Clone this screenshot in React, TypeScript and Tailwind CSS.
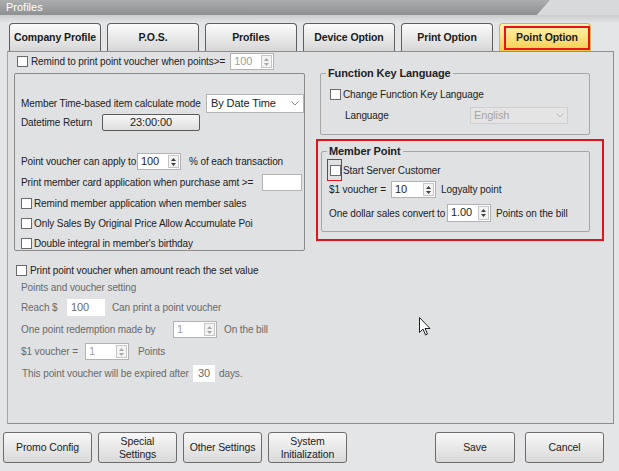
import React from 'react';

function Check() {
  return <span className="inline-block w-[11px] h-[11px] bg-white border border-[#6a6a6a] shrink-0" />;
}

function Arrows({ disabled }: { disabled?: boolean }) {
  const c = disabled ? '#a8a8a8' : '#404040';
  return (
    <span className="w-[11px] my-[1px] mr-[1px] border border-[#c6c6c6] bg-[#f3f3f3] flex flex-col items-center justify-center gap-[2px]">
      <svg width="5" height="3" viewBox="0 0 5 3">
        <path d="M0 3 L2.5 0 L5 3 Z" fill={c} />
      </svg>
      <svg width="5" height="3" viewBox="0 0 5 3">
        <path d="M0 0 L2.5 3 L5 0 Z" fill={c} />
      </svg>
    </span>
  );
}

function Spin({ value, className, disabled }: { value: string; className: string; disabled?: boolean }) {
  return (
    <div className={`flex h-[17px] bg-white border border-[#b2b2b2] shrink-0 ${className}`}>
      <span className={`flex-1 pl-[3px] leading-[15px] text-[11px] ${disabled ? 'text-[#a0a0a0]' : 'text-[#1e1e1e]'}`}>{value}</span>
      <Arrows disabled={disabled} />
    </div>
  );
}

function Chevron({ color }: { color: string }) {
  return (
    <svg width="8" height="5" viewBox="0 0 8 5" className="shrink-0">
      <path d="M0.5 0.5 L4 4 L7.5 0.5" stroke={color} fill="none" strokeWidth="1" />
    </svg>
  );
}

function Tab({ label, active }: { label: string; active?: boolean }) {
  if (active) {
    return (
      <div className="w-[92px] h-[28px] rounded-t-[4px] border border-b-0 border-[#d9b640] bg-gradient-to-b from-[#fff4b0] to-[#f5cd45] flex items-center justify-end">
        <div className="w-[86px] h-[24px] border-2 border-[#e3141c] flex items-center justify-center font-bold text-[10.5px] text-[#1a1a1a]">
          {label}
        </div>
      </div>
    );
  }
  return (
    <div className="w-[92px] h-[28px] rounded-t-[4px] border border-b-0 border-[#5e5e5e] bg-gradient-to-b from-[#fcfcfc] to-[#d6d6d6] flex items-center justify-center font-bold text-[10.5px] text-[#1a1a1a]">
      {label}
    </div>
  );
}

function Btn({ children, className }: { children: React.ReactNode; className: string }) {
  return (
    <div
      className={`h-[31px] rounded-[3px] border border-[#6c6c6c] bg-gradient-to-b from-[#f8f8f8] to-[#d9d9d9] flex items-center justify-center text-center text-[10.5px] leading-[13px] text-[#222] ${className}`}
    >
      {children}
    </div>
  );
}

export default function App() {
  return (
    <div className="relative w-[619px] h-[471px] overflow-hidden bg-[#e4e5e7] text-[10px] tracking-[-0.1px] whitespace-nowrap text-[#222] [font-family:'Liberation_Sans',Arial,sans-serif]">
      {/* title bar */}
      <div className="h-[15px] flex bg-[#d8d9db]">
        <div className="w-[550px] h-full bg-gradient-to-b from-[#acadaf] to-[#8f9092] [clip-path:polygon(0_0,100%_0,97.6%_100%,0_100%)] pl-[6px] text-white text-[11px] tracking-normal leading-[15px]">
          Profiles
        </div>
      </div>
      <div className="h-[8px] bg-gradient-to-b from-[#cacbcd] to-[#e4e5e7]" />

      {/* tabs */}
      <div className="flex gap-[6px] pl-[9px] h-[28px]">
        <Tab label="Company Profile" />
        <Tab label="P.O.S." />
        <Tab label="Profiles" />
        <Tab label="Device Option" />
        <Tab label="Print Option" />
        <Tab label="Point Option" active />
      </div>

      {/* panel */}
      <div className="ml-[7px] w-[607px] h-[373px] border border-[#8e8e8e] border-l-[#a4a4a4] bg-[#e0e1e3] flex">
        {/* left column */}
        <div className="w-[308px] shrink-0">
          <div className="mt-[1px] h-[17px] flex items-center pl-[9px]">
            <Check />
            <span className="ml-[3px]">Remind to print point voucher when points&gt;=</span>
            <Spin value="100" className="w-[44px] ml-[5px]" disabled />
          </div>

          <div className="mt-[3px] ml-[6px] w-[291px] h-[178px] border border-[#8a8a8a] rounded-[2px] pl-[6px]">
            <div className="mt-[20px] h-[19px] flex items-center">
              <span>Member Time-based item calculate mode</span>
              <div className="ml-auto w-[98px] h-[19px] bg-white border border-[#b4b4b4] flex items-center justify-between px-[4px]">
                <span className="text-[11px]">By Date Time</span>
                <Chevron color="#8a8a8a" />
              </div>
            </div>
            <div className="mt-[1px] h-[17px] flex items-center">
              <span className="w-[81px]">Datetime Return</span>
              <div className="w-[98px] h-[17px] rounded-[2px] border border-[#5a5a5a] bg-gradient-to-b from-[#f7f7f7] to-[#dedede] flex items-center justify-center text-[11px]">
                23:00:00
              </div>
            </div>
            <div className="mt-[22px] h-[17px] flex items-center">
              <span className="w-[116px]">Point voucher can apply to</span>
              <Spin value="100" className="w-[44px]" />
              <span className="ml-[8px]">% of each transaction</span>
            </div>
            <div className="mt-[4px] h-[17px] flex items-center">
              <span>Print member card application when purchase amt &gt;=</span>
              <div className="ml-auto mr-[2px] w-[40px] h-[17px] bg-white border border-[#b4b4b4]" />
            </div>
            <div className="mt-[2px] h-[20px] flex items-center">
              <Check />
              <span className="ml-[2px]">Remind member application when member sales</span>
            </div>
            <div className="h-[20px] flex items-center">
              <Check />
              <span className="ml-[2px]">Only Sales By Original Price Allow Accumulate Poi</span>
            </div>
            <div className="h-[20px] flex items-center">
              <Check />
              <span className="ml-[2px]">Double integral in member's birthday</span>
            </div>
          </div>

          <div className="mt-[11px] h-[16px] flex items-center pl-[8px]">
            <Check />
            <span className="ml-[3px]">Print point voucher when amount reach the set value</span>
          </div>
          <div className="pl-[13px] text-[#6a6a6a]">
            <div className="h-[18px] flex items-center">Points and voucher setting</div>
            <div className="mt-[3px] h-[17px] flex items-center">
              <span className="w-[46px]">Reach $</span>
              <div className="w-[38px] h-[17px] bg-white pl-[4px] leading-[17px] text-[11px] text-[#6a6a6a]">100</div>
              <span className="ml-[7px]">Can print a point voucher</span>
            </div>
            <div className="mt-[5px] h-[17px] flex items-center">
              <span className="w-[152px]">One point redemption made by</span>
              <Spin value="1" className="w-[44px]" disabled />
              <span className="ml-[7px]">On the bill</span>
            </div>
            <div className="mt-[5px] h-[17px] flex items-center">
              <span className="w-[64px]">$1 voucher =</span>
              <Spin value="1" className="w-[44px]" disabled />
              <span className="ml-[9px]">Points</span>
            </div>
            <div className="mt-[5px] h-[17px] flex items-center pl-[1px]">
              <span className="w-[171px]">This point voucher will be expired after</span>
              <div className="w-[22px] h-[17px] bg-white text-center leading-[17px] text-[11px]">30</div>
              <span className="ml-[4px]">days.</span>
            </div>
          </div>
        </div>

        {/* right column */}
        <div className="flex-1">
          <fieldset className="mt-[15px] ml-[4px] w-[270px] h-[68px] border border-[#a6a6a6] rounded-[2px]">
            <legend className="ml-[5px] px-[2px] font-bold text-[11px] leading-[13px]">Function Key Language</legend>
            <div className="mt-[7px] h-[14px] flex items-center pl-[9px]">
              <Check />
              <span className="ml-[2px]">Change Function Key Language</span>
            </div>
            <div className="mt-[6px] h-[17px] flex items-center pl-[24px]">
              <span className="w-[125px]">Language</span>
              <div className="w-[98px] h-[17px] bg-[#e4e4e4] border border-[#cfcfcf] flex items-center justify-between px-[3px] text-[#a4a4a4] text-[11px]">
                <span>English</span>
                <Chevron color="#b8b8b8" />
              </div>
            </div>
          </fieldset>

          <div className="mt-[4px] w-[288px] h-[102px] border-2 border-[#e3141c] pt-[4px]">
            <fieldset className="ml-[3px] w-[269px] h-[87px] border border-[#a6a6a6] rounded-[2px]">
              <legend className="ml-[5px] px-[2px] font-bold text-[11px] leading-[13px]">Member Point</legend>
              <div className="mt-[1px] h-[22px] flex items-center pl-[5px]">
                <span className="w-[15px] h-[22px] border border-[#e3141c] flex items-center justify-end">
                  <Check />
                </span>
                <span className="ml-[1px]">Start Server Customer</span>
              </div>
              <div className="h-[17px] flex items-center pl-[7px]">
                <span className="w-[62px]">$1 voucher =</span>
                <Spin value="10" className="w-[45px]" />
                <span className="ml-[5px]">Logyalty point</span>
              </div>
              <div className="mt-[6px] h-[18px] flex items-center pl-[7px]">
                <span className="w-[118px]">One dollar sales convert to</span>
                <Spin value="1.00" className="w-[44px] h-[18px]" />
                <span className="ml-[5px]">Points on the bill</span>
              </div>
            </fieldset>
          </div>
        </div>
      </div>

      {/* bottom buttons */}
      <div className="mt-[8px] flex pl-[3px]">
        <Btn className="w-[89px]">Promo Config</Btn>
        <Btn className="w-[79px] ml-[6px]">Special<br />Settings</Btn>
        <Btn className="w-[79px] ml-[6px]">Other Settings</Btn>
        <Btn className="w-[79px] ml-[6px]">System<br />Initialization</Btn>
        <Btn className="w-[80px] ml-[88px]">Save</Btn>
        <Btn className="w-[79px] ml-[10px]">Cancel</Btn>
      </div>

      {/* mouse pointer */}
      <svg className="absolute left-[419px] top-[317px]" width="13" height="19" viewBox="0 0 13 19">
        <path d="M0.5 0.5 L0.5 15.5 L4 12 L6.5 18 L8.5 17 L6 11.5 L11 11.5 Z" fill="#fff" stroke="#222" strokeWidth="1" />
      </svg>
    </div>
  );
}
